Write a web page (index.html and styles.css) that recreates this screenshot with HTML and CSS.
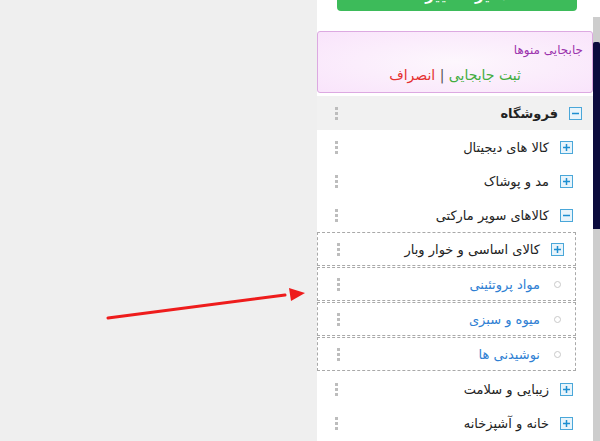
FILE: index.html
```html
<!DOCTYPE html>
<html lang="fa">
<head>
    <meta charset="UTF-8">
    <meta name="viewport" content="width=device-width, initial-scale=1.0">
    <title>مدیریت منوها</title>
    <link rel="stylesheet" href="styles.css">
</head>
<body>

    <div class="page">
        <div class="canvas">
            <svg class="pointer" width="220" height="40" viewBox="0 0 220 40">
                <line x1="8" y1="33" x2="185" y2="10" stroke="#ee1c1c" stroke-width="3" stroke-linecap="round"/>
                <polygon points="205,8 189,3 191,16" fill="#ee1c1c"/>
            </svg>
        </div>

        <div class="panel">
            <div class="panel-body">
                <button type="button" class="save-btn">ذخیره تغییرات</button>

                <div class="move-box">
                    <div class="move-title">جابجایی منوها</div>
                    <div class="move-actions">
                        <a class="ok">ثبت جابجایی</a>
                        <span class="sep">|</span>
                        <a class="cancel">انصراف</a>
                    </div>
                </div>

                <ul class="tree">
                    <li>
                        <div class="node root">
                            <svg class="toggle" width="13" height="13" viewBox="0 0 13 13"><rect x="0.5" y="0.5" width="12" height="12" fill="#e8f4fb" stroke="#4aa7d9"/><line x1="3" y1="6.5" x2="10" y2="6.5" stroke="#1d8fd0" stroke-width="1.5"/></svg>
                            <span class="label">فروشگاه</span>
                            <svg class="handle" width="3" height="13" viewBox="0 0 3 13"><rect x="0" y="0" width="3" height="3" fill="#bdbdbd"/><rect x="0" y="5" width="3" height="3" fill="#bdbdbd"/><rect x="0" y="10" width="3" height="3" fill="#bdbdbd"/></svg>
                        </div>
                        <ul class="sub level1">
                            <li>
                                <div class="node">
                                    <svg class="toggle" width="13" height="13" viewBox="0 0 13 13"><rect x="0.5" y="0.5" width="12" height="12" fill="#e8f4fb" stroke="#4aa7d9"/><line x1="3" y1="6.5" x2="10" y2="6.5" stroke="#1d8fd0" stroke-width="1.5"/><line x1="6.5" y1="3" x2="6.5" y2="10" stroke="#1d8fd0" stroke-width="1.5"/></svg>
                                    <span class="label">کالا های دیجیتال</span>
                                    <svg class="handle" width="3" height="13" viewBox="0 0 3 13"><rect x="0" y="0" width="3" height="3" fill="#bdbdbd"/><rect x="0" y="5" width="3" height="3" fill="#bdbdbd"/><rect x="0" y="10" width="3" height="3" fill="#bdbdbd"/></svg>
                                </div>
                            </li>
                            <li>
                                <div class="node">
                                    <svg class="toggle" width="13" height="13" viewBox="0 0 13 13"><rect x="0.5" y="0.5" width="12" height="12" fill="#e8f4fb" stroke="#4aa7d9"/><line x1="3" y1="6.5" x2="10" y2="6.5" stroke="#1d8fd0" stroke-width="1.5"/><line x1="6.5" y1="3" x2="6.5" y2="10" stroke="#1d8fd0" stroke-width="1.5"/></svg>
                                    <span class="label">مد و پوشاک</span>
                                    <svg class="handle" width="3" height="13" viewBox="0 0 3 13"><rect x="0" y="0" width="3" height="3" fill="#bdbdbd"/><rect x="0" y="5" width="3" height="3" fill="#bdbdbd"/><rect x="0" y="10" width="3" height="3" fill="#bdbdbd"/></svg>
                                </div>
                            </li>
                            <li>
                                <div class="node">
                                    <svg class="toggle" width="13" height="13" viewBox="0 0 13 13"><rect x="0.5" y="0.5" width="12" height="12" fill="#e8f4fb" stroke="#4aa7d9"/><line x1="3" y1="6.5" x2="10" y2="6.5" stroke="#1d8fd0" stroke-width="1.5"/></svg>
                                    <span class="label">کالاهای سوپر مارکتی</span>
                                    <svg class="handle" width="3" height="13" viewBox="0 0 3 13"><rect x="0" y="0" width="3" height="3" fill="#bdbdbd"/><rect x="0" y="5" width="3" height="3" fill="#bdbdbd"/><rect x="0" y="10" width="3" height="3" fill="#bdbdbd"/></svg>
                                </div>
                                <ul class="sub level2">
                                    <li class="drop">
                                        <div class="node">
                                            <svg class="toggle" width="13" height="13" viewBox="0 0 13 13"><rect x="0.5" y="0.5" width="12" height="12" fill="#e8f4fb" stroke="#4aa7d9"/><line x1="3" y1="6.5" x2="10" y2="6.5" stroke="#1d8fd0" stroke-width="1.5"/><line x1="6.5" y1="3" x2="6.5" y2="10" stroke="#1d8fd0" stroke-width="1.5"/></svg>
                                            <span class="label">کالای اساسی و خوار وبار</span>
                                            <svg class="handle" width="3" height="13" viewBox="0 0 3 13"><rect x="0" y="0" width="3" height="3" fill="#bdbdbd"/><rect x="0" y="5" width="3" height="3" fill="#bdbdbd"/><rect x="0" y="10" width="3" height="3" fill="#bdbdbd"/></svg>
                                        </div>
                                    </li>
                                    <li class="drop">
                                        <div class="node leaf">
                                            <span class="bullet"></span>
                                            <span class="label">مواد پروتئینی</span>
                                            <svg class="handle" width="3" height="13" viewBox="0 0 3 13"><rect x="0" y="0" width="3" height="3" fill="#bdbdbd"/><rect x="0" y="5" width="3" height="3" fill="#bdbdbd"/><rect x="0" y="10" width="3" height="3" fill="#bdbdbd"/></svg>
                                        </div>
                                    </li>
                                    <li class="drop">
                                        <div class="node leaf">
                                            <span class="bullet"></span>
                                            <span class="label">میوه و سبزی</span>
                                            <svg class="handle" width="3" height="13" viewBox="0 0 3 13"><rect x="0" y="0" width="3" height="3" fill="#bdbdbd"/><rect x="0" y="5" width="3" height="3" fill="#bdbdbd"/><rect x="0" y="10" width="3" height="3" fill="#bdbdbd"/></svg>
                                        </div>
                                    </li>
                                    <li class="drop">
                                        <div class="node leaf">
                                            <span class="bullet"></span>
                                            <span class="label">نوشیدنی ها</span>
                                            <svg class="handle" width="3" height="13" viewBox="0 0 3 13"><rect x="0" y="0" width="3" height="3" fill="#bdbdbd"/><rect x="0" y="5" width="3" height="3" fill="#bdbdbd"/><rect x="0" y="10" width="3" height="3" fill="#bdbdbd"/></svg>
                                        </div>
                                    </li>
                                </ul>
                            </li>
                            <li>
                                <div class="node">
                                    <svg class="toggle" width="13" height="13" viewBox="0 0 13 13"><rect x="0.5" y="0.5" width="12" height="12" fill="#e8f4fb" stroke="#4aa7d9"/><line x1="3" y1="6.5" x2="10" y2="6.5" stroke="#1d8fd0" stroke-width="1.5"/><line x1="6.5" y1="3" x2="6.5" y2="10" stroke="#1d8fd0" stroke-width="1.5"/></svg>
                                    <span class="label">زیبایی و سلامت</span>
                                    <svg class="handle" width="3" height="13" viewBox="0 0 3 13"><rect x="0" y="0" width="3" height="3" fill="#bdbdbd"/><rect x="0" y="5" width="3" height="3" fill="#bdbdbd"/><rect x="0" y="10" width="3" height="3" fill="#bdbdbd"/></svg>
                                </div>
                            </li>
                            <li>
                                <div class="node">
                                    <svg class="toggle" width="13" height="13" viewBox="0 0 13 13"><rect x="0.5" y="0.5" width="12" height="12" fill="#e8f4fb" stroke="#4aa7d9"/><line x1="3" y1="6.5" x2="10" y2="6.5" stroke="#1d8fd0" stroke-width="1.5"/><line x1="6.5" y1="3" x2="6.5" y2="10" stroke="#1d8fd0" stroke-width="1.5"/></svg>
                                    <span class="label">خانه و آشپزخانه</span>
                                    <svg class="handle" width="3" height="13" viewBox="0 0 3 13"><rect x="0" y="0" width="3" height="3" fill="#bdbdbd"/><rect x="0" y="5" width="3" height="3" fill="#bdbdbd"/><rect x="0" y="10" width="3" height="3" fill="#bdbdbd"/></svg>
                                </div>
                            </li>
                        </ul>
                    </li>
                </ul>
            </div>

            <div class="scrollbar">
                <div class="scroll-thumb"></div>
            </div>
        </div>
    </div>

</body>
</html>
```

FILE: styles.css
```css
body {
    margin: 0;
    padding: 0;
    font-family: Tahoma, "DejaVu Sans", sans-serif;
    background: #efefef;
}
.page {
    display: flex;
    height: 441px;
    overflow: hidden;
}
.canvas {
    width: 317px;
    flex-shrink: 0;
    position: relative;
    background: #efefef;
}
.pointer {
    position: absolute;
    left: 100px;
    top: 285px;
}
.panel {
    flex: 1;
    display: flex;
    background: white;
}
.panel-body {
    width: 276px;
    direction: rtl;
    display: flex;
    flex-direction: column;
}
.save-btn {
    height: 32px;
    margin: -21px 16px 0 20px;
    background: #3dbb5a;
    color: white;
    border: none;
    border-radius: 4px;
    font-family: inherit;
    font-size: 15px;
    font-weight: bold;
    line-height: 20px;
    padding: 0;
}
.move-box {
    margin-top: 20px;
    height: 60px;
    border: 1px solid #dca9e1;
    border-radius: 3px;
    background: radial-gradient(ellipse at center, #fdf7fd 0%, #f9e4fb 100%);
    padding: 0 9px;
}
.move-title {
    margin-top: 10px;
    font-size: 12px;
    line-height: 16px;
    color: #9c34ad;
}
.move-actions {
    margin-top: 7px;
    text-align: center;
    font-size: 14px;
    line-height: 20px;
}
.move-actions .ok {
    color: #43ad3f;
}
.move-actions .sep {
    color: #555;
}
.move-actions .cancel {
    color: #e53030;
}
.tree, .sub {
    list-style: none;
    margin: 0;
    padding: 0;
}
.tree {
    margin-top: 3px;
}
.level1 {
    margin-right: 9px;
}
.level2 {
    margin-right: 8px;
}
.node {
    display: flex;
    align-items: center;
    height: 34px;
    padding: 0 11px 0 0;
    font-size: 13px;
    color: #222;
}
.node.root {
    background: #f1f1f1;
    font-weight: bold;
}
.toggle {
    flex-shrink: 0;
    margin-left: 11px;
}
.bullet {
    width: 13px;
    height: 13px;
    margin-left: 11px;
    display: flex;
    align-items: center;
    justify-content: center;
    flex-shrink: 0;
}
.bullet::before {
    content: "";
    width: 5px;
    height: 5px;
    border: 1px solid #c9c9c9;
    border-radius: 50%;
}
.leaf .label {
    color: #2f7fd3;
}
.handle {
    margin-right: auto;
    margin-left: 18px;
}
.drop {
    border: 1px dashed #a9a9a9;
    margin-bottom: 1px;
}
.drop .node {
    height: 32px;
}
.drop .handle {
    margin-left: 19px;
}
.scrollbar {
    width: 7px;
    margin-top: 17px;
    background: #cdcdcd;
}
.scroll-thumb {
    margin-top: 25px;
    height: 187px;
    background: #0b0b3d;
    border-radius: 2px 2px 0 0;
}
```
